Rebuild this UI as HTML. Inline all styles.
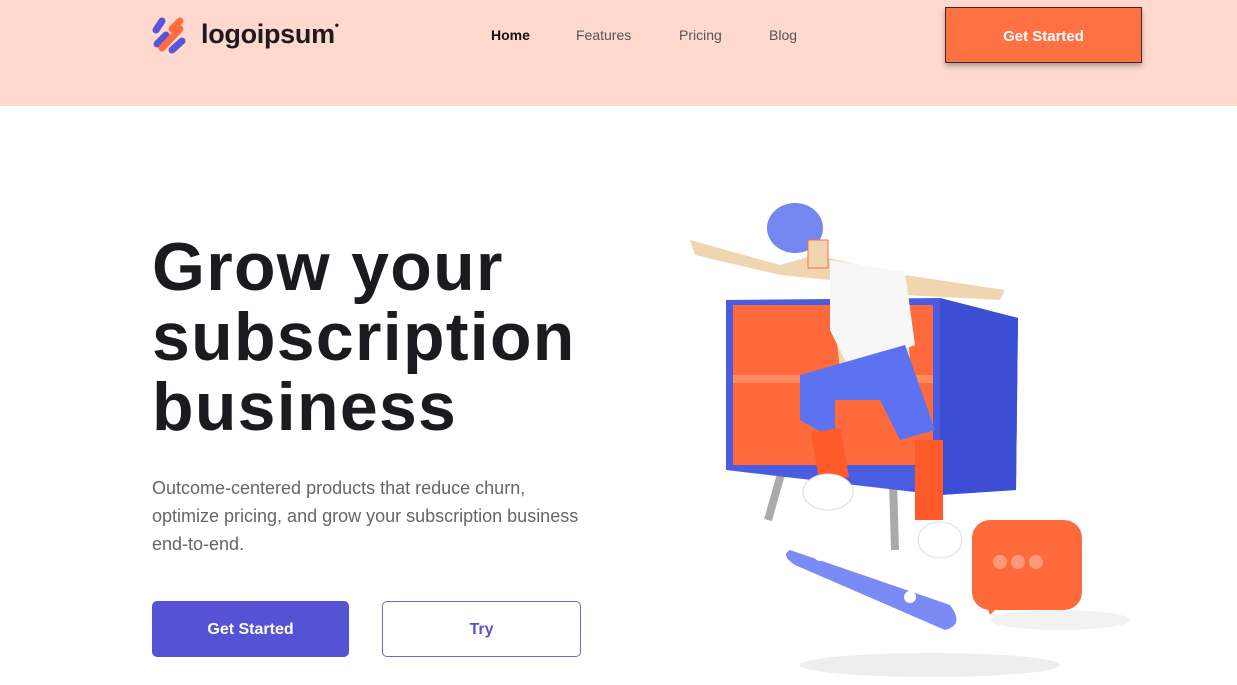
<!DOCTYPE html>
<html><head><style>
*{margin:0;padding:0;box-sizing:border-box}
body{width:1237px;height:685px;overflow:hidden;background:#fff;font-family:"Liberation Sans",sans-serif;position:relative}
.hdr{position:absolute;left:0;top:0;width:1237px;height:106px;background:#ffd9cd}
.logo{position:absolute;left:152px;top:17px}
.logotxt{position:absolute;left:201px;top:18px;font-size:27px;font-weight:bold;color:#1b1b1f;letter-spacing:-0.3px}
.nav a{position:absolute;top:27px;font-size:14px;color:#555;text-decoration:none}
.btn1{position:absolute;left:945px;top:7px;width:197px;height:56px;background:#ff7143;border:1px solid #3a2a2a;box-shadow:0 3px 5px rgba(0,0,0,.3);color:#fff;font-size:15px;font-weight:bold;text-align:center;line-height:57px}
h1{position:absolute;left:152px;top:232px;font-size:68px;line-height:70px;font-weight:bold;color:#1b1b1f;letter-spacing:1.3px}
p{position:absolute;left:152px;top:474px;font-size:18px;line-height:28px;color:#666;width:440px}
.b2{position:absolute;left:152px;top:601px;width:197px;height:56px;background:#5552d6;border-radius:5px;color:#fff;font-size:16px;font-weight:bold;text-align:center;line-height:57px}
.b3{position:absolute;left:382px;top:601px;width:199px;height:56px;border:1px solid #6c68e0;border-radius:5px;color:#5552d6;font-size:16px;font-weight:bold;text-align:center;line-height:56px}
</style></head><body>
<div class="hdr"></div>
<svg class="logo" width="38" height="38" viewBox="0 0 38 38">
<g stroke-linecap="round" fill="none" stroke-width="7">
<line x1="4" y1="13" x2="10" y2="4" stroke="#5a54d8"/>
<line x1="5" y1="27" x2="14" y2="18" stroke="#5a54d8"/>
<line x1="10" y1="31" x2="28" y2="12" stroke="#ff6b3d"/>
<line x1="20" y1="33" x2="30" y2="24" stroke="#5a54d8"/>
<line x1="20" y1="12" x2="28" y2="4" stroke="#ff6b3d"/>
</g></svg>
<div class="logotxt">logoipsum<sup style="font-size:12px;vertical-align:14px">•</sup></div>
<div class="nav"><a style="left:491px;color:#111;font-weight:bold">Home</a><a style="left:576px">Features</a><a style="left:679px">Pricing</a><a style="left:769px">Blog</a></div>
<div class="btn1">Get Started</div>
<h1>Grow your<br>subscription<br>business</h1>
<p>Outcome-centered products that reduce churn, optimize pricing, and grow your subscription business end-to-end.</p>
<div class="b2">Get Started</div>
<div class="b3">Try</div>
<svg style="position:absolute;left:660px;top:190px" width="500" height="495" viewBox="660 190 500 495">
<ellipse cx="930" cy="665" rx="130" ry="12" fill="#eee"/>
<ellipse cx="1060" cy="620" rx="70" ry="10" fill="#f2f2f2"/>
<line x1="785" y1="460" x2="768" y2="520" stroke="#aaa" stroke-width="8"/>
<line x1="893" y1="480" x2="895" y2="550" stroke="#aaa" stroke-width="8"/>
<polygon points="726,300 940,298 1018,318 1016,490 940,495 726,470" fill="#4a5ce0"/>
<polygon points="940,298 1018,318 1016,490 940,495" fill="#3c4fd4"/>
<rect x="733" y="305" width="200" height="160" fill="#ff6a3d"/>
<rect x="733" y="375" width="200" height="8" fill="#ff8a60"/>
<path d="M690 240 L780 265 L815 255 L905 275 L1005 290 L1000 300 L905 295 L910 360 L840 370 L830 280 L780 275 L695 255Z" fill="#f0d6b0"/>
<path d="M830 260 L905 272 L915 345 L850 370 L830 330Z" fill="#f7f7f7"/>
<path d="M800 375 L905 345 L935 430 L900 440 L880 400 L835 400 L835 440 L800 420Z" fill="#5c72f0"/>
<rect x="815" y="430" width="30" height="50" fill="#ff5a2a" transform="rotate(-10 830 455)"/>
<rect x="915" y="440" width="28" height="80" fill="#ff5a2a"/>
<ellipse cx="828" cy="492" rx="25" ry="18" fill="#fff" stroke="#ddd"/>
<ellipse cx="940" cy="540" rx="22" ry="18" fill="#fff" stroke="#ddd"/>
<ellipse cx="795" cy="228" rx="28" ry="25" fill="#7487f0"/>
<rect x="808" y="240" width="20" height="28" fill="#f0d6b0" stroke="#ff6a3d"/>
<path d="M790 550 L950 605 Q965 625 945 630 L795 565 Q780 555 790 550Z" fill="#7b8bf5"/>
<circle cx="820" cy="555" r="6" fill="#fff"/><circle cx="910" cy="597" r="6" fill="#fff"/>
<rect x="972" y="520" width="110" height="90" rx="18" fill="#ff6a3d"/>
<path d="M985 600 L990 615 L1005 600Z" fill="#ff6a3d"/>
<circle cx="1000" cy="562" r="7" fill="#ff9a78"/><circle cx="1018" cy="562" r="7" fill="#ff9a78"/><circle cx="1036" cy="562" r="7" fill="#ff9a78"/>
</svg>
</body></html>
